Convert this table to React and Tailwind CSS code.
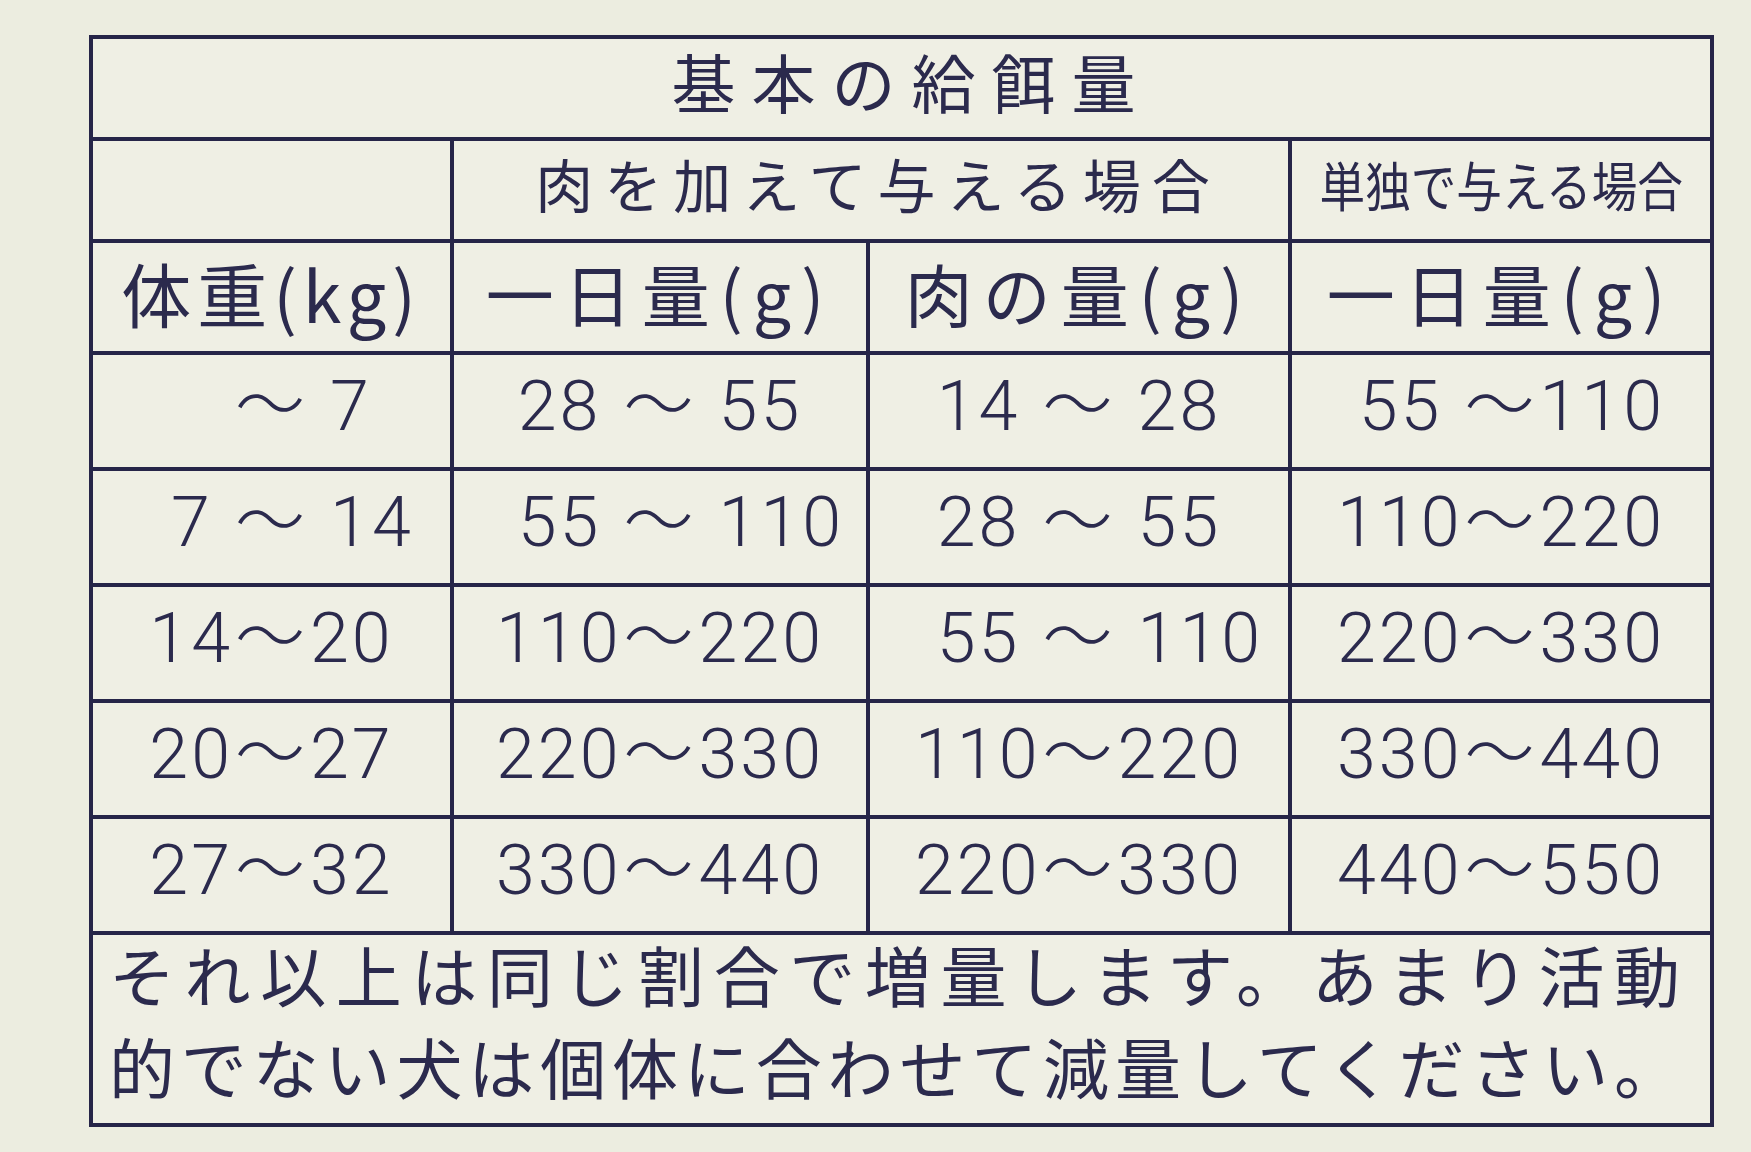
const rows = [
  [["", " 7"], ["28 ", " 55"], ["14 ", " 28"], ["55 ", "110"]],
  [["7 ", " 14"], ["55 ", " 110"], ["28 ", " 55"], ["110", "220"]],
  [["14", "20"], ["110", "220"], ["55 ", " 110"], ["220", "330"]],
  [["20", "27"], ["220", "330"], ["110", "220"], ["330", "440"]],
  [["27", "32"], ["330", "440"], ["220", "330"], ["440", "550"]],
];

const jp = "font-['Noto_Sans_CJK_JP',sans-serif]";
const num = "font-['Roboto','Noto_Sans_CJK_JP',sans-serif] font-light";

function Range({ from, to }) {
  return (
    <div className={`grid w-full grid-cols-[1fr_auto_1fr] items-center whitespace-pre text-[70px] leading-none tracking-[3px] ${num}`}>
      <span className="text-right">{from}</span>
      <span className="px-[2px]">～</span>
      <span className="text-left">{to}</span>
    </div>
  );
}

function Cell({ className = "", children }) {
  return (
    <div className={`flex items-center justify-center bg-[#efefe4] ${className}`}>
      {children}
    </div>
  );
}

export default function App() {
  return (
    <div className="h-[1152px] w-[1751px] overflow-hidden bg-[#ecede0] pt-[35px] pl-[89px] text-[#2b2a4d]">
      <div className="grid w-max grid-cols-[357px_412px_418px_418px] grid-rows-[98px_98px_108px_112px_112px_112px_112px_112px_188px] gap-[4px] bg-[#262548] p-[4px]">
        <Cell className="col-span-4 pb-[16px] pl-[20px]">
          <span className={`text-[64px] leading-none tracking-[16px] ${jp}`}>基本の給餌量</span>
        </Cell>

        <Cell />
        <Cell className="col-span-2 pb-[14px] pl-[14px]">
          <span className={`text-[58px] leading-none tracking-[11px] ${jp}`}>肉を加えて与える場合</span>
        </Cell>
        <Cell className="pb-[12px]">
          <span className={`inline-block scale-x-[0.86] whitespace-nowrap text-[53px] leading-none ${jp}`}>
            単独で与える場合
          </span>
        </Cell>

        <Cell className="pb-[8px]">
          <span className={`text-[70px] leading-none tracking-[6px] ${jp}`}>体重(kg)</span>
        </Cell>
        <Cell className="pb-[8px]">
          <span className={`text-[68px] leading-none tracking-[10px] ${jp}`}>一日量(g)</span>
        </Cell>
        <Cell className="pb-[8px]">
          <span className={`text-[68px] leading-none tracking-[10px] ${jp}`}>肉の量(g)</span>
        </Cell>
        <Cell className="pb-[8px]">
          <span className={`text-[68px] leading-none tracking-[10px] ${jp}`}>一日量(g)</span>
        </Cell>

        {rows.map((row, i) =>
          row.map(([from, to], j) => (
            <Cell key={`${i}-${j}`} className="pb-[10px]">
              <Range from={from} to={to} />
            </Cell>
          ))
        )}

        <div className={`col-span-4 flex flex-col justify-center gap-[26px] bg-[#efefe4] pb-[20px] pl-[16px] pr-[30px] text-[66px] leading-none ${jp}`}>
          <p className="text-justify [text-align-last:justify]">それ以上は同じ割合で増量します。あまり活動</p>
          <p className="text-justify [text-align-last:justify]">的でない犬は個体に合わせて減量してください。</p>
        </div>
      </div>
    </div>
  );
}
